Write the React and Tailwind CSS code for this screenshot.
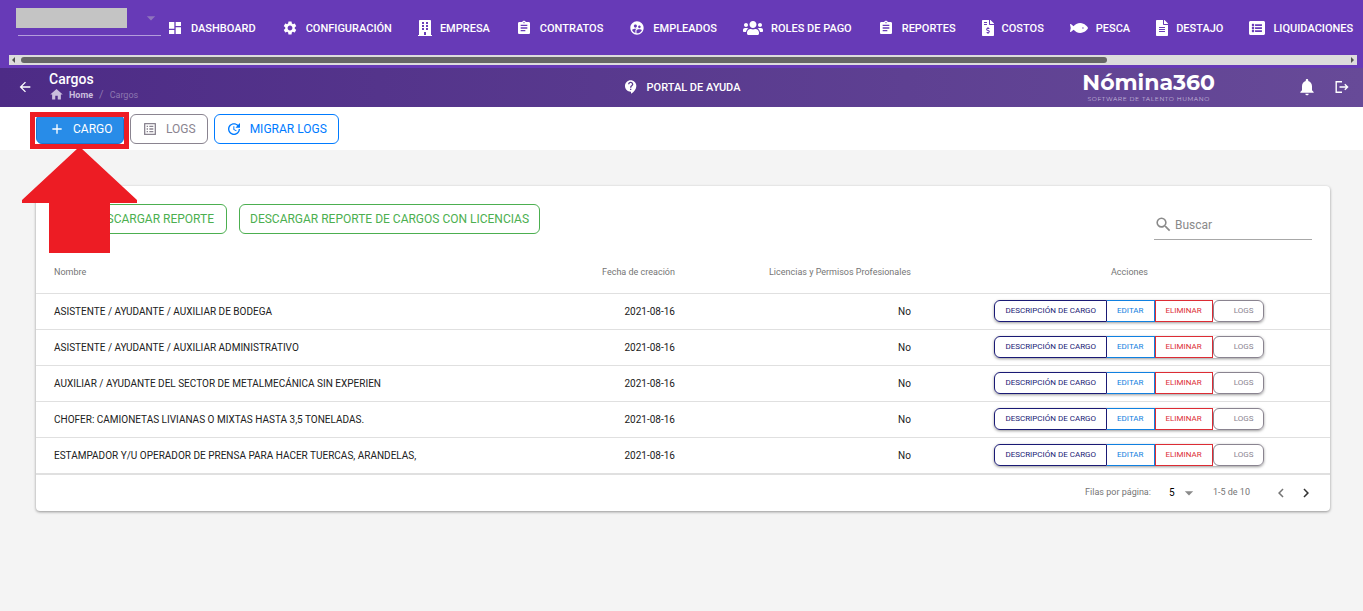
import { FaBuilding, FaFileAlt, FaFileInvoiceDollar, FaFish, FaListAlt, FaUsers } from 'react-icons/fa';
import {
  MdAdd,
  MdArrowBack,
  MdArrowDropDown,
  MdAssignment,
  MdChevronLeft,
  MdChevronRight,
  MdContactSupport,
  MdDashboard,
  MdHome,
  MdNotifications,
  MdOutlineListAlt,
  MdSearch,
  MdSettings,
  MdSupervisedUserCircle,
  MdUpdate,
} from 'react-icons/md';

const NAV_ITEMS = [
  { label: 'DASHBOARD', icon: MdDashboard, size: 'w-4' },
  { label: 'CONFIGURACIÓN', icon: MdSettings, size: 'w-4' },
  { label: 'EMPRESA', icon: FaBuilding, size: 'w-[14px]' },
  { label: 'CONTRATOS', icon: MdAssignment, size: 'w-4' },
  { label: 'EMPLEADOS', icon: MdSupervisedUserCircle, size: 'w-4' },
  { label: 'ROLES DE PAGO', icon: FaUsers, size: 'w-5' },
  { label: 'REPORTES', icon: MdAssignment, size: 'w-4' },
  { label: 'COSTOS', icon: FaFileInvoiceDollar, size: 'w-3' },
  { label: 'PESCA', icon: FaFish, size: 'w-[18px]' },
  { label: 'DESTAJO', icon: FaFileAlt, size: 'w-3' },
  { label: 'LIQUIDACIONES', icon: FaListAlt, size: 'w-4' },
];

const ROWS = [
  'ASISTENTE / AYUDANTE / AUXILIAR DE BODEGA',
  'ASISTENTE / AYUDANTE / AUXILIAR ADMINISTRATIVO',
  'AUXILIAR / AYUDANTE DEL SECTOR DE METALMECÁNICA SIN EXPERIEN',
  'CHOFER: CAMIONETAS LIVIANAS O MIXTAS HASTA 3,5 TONELADAS.',
  'ESTAMPADOR Y/U OPERADOR DE PRENSA PARA HACER TUERCAS, ARANDELAS,',
];

const NavBar = () => (
  <nav className="bg-[#673ab7] text-white pb-[3px]">
    <div className="flex h-[55px] overflow-hidden pl-4">
      <div className="w-[145px] shrink-0 pt-2">
        <div className="flex items-center justify-between">
          <div className="h-5 w-[111px] bg-[#c4c4c4]" />
          <MdArrowDropDown className="size-5 text-[#8f75bd]" />
        </div>
        <div className="mt-[7px] ml-0.5 h-px bg-[#b39ddb]" />
      </div>
      <ul className="flex items-center gap-[26px] pl-1.5">
        {NAV_ITEMS.map(({ label, icon: Icon, size }) => (
          <li key={label}>
            <a href="#" className="flex items-center gap-2 text-[11px] leading-4 font-medium whitespace-nowrap">
              <Icon className={`${size} h-4 shrink-0`} />
              <span className="pt-0.5">{label}</span>
            </a>
          </li>
        ))}
      </ul>
    </div>
    {/* Horizontal scroll track */}
    <div className="mr-1.5 ml-[9px] flex h-2.5 items-center justify-between bg-[#dcdcdc] px-[3px]">
      <svg className="h-1.5 w-[3px]" viewBox="0 0 3 6" fill="#505050"><path d="M3 0v6L0 3z" /></svg>
      <div className="mx-1.5 flex-1">
        <div className="h-1.5 w-[82%] rounded-full bg-[#666]" />
      </div>
      <svg className="h-1.5 w-[3px]" viewBox="0 0 3 6" fill="#505050"><path d="M0 0v6l3-3z" /></svg>
    </div>
  </nav>
);

const Header = () => (
  <header className="grid h-[39px] grid-cols-[1fr_auto_1fr] items-center bg-linear-to-r from-[#4d2b86] to-[#674a98] pb-0.5 text-white">
    <div className="flex items-center pl-[17px]">
      <button type="button" aria-label="Volver"><MdArrowBack className="size-4" /></button>
      <div className="ml-4">
        <h1 className="text-sm leading-4 font-medium">Cargos</h1>
        <div className="flex items-center text-[9px] leading-4">
          <MdHome className="size-[15px] text-[#cabedd]" />
          <a href="#" className="ml-[5px] font-bold text-[#cabedd]">Home</a>
          <span className="mx-1.5 text-[11px] text-[#8d77b0]">/</span>
          <span className="text-[#8d77b0]">Cargos</span>
        </div>
      </div>
    </div>
    <a href="#" className="flex items-center gap-2 text-[11px] leading-4 font-medium">
      <MdContactSupport className="size-4" />
      <span className="pt-0.5">PORTAL DE AYUDA</span>
    </a>
    <div className="flex items-center justify-end pr-[14px]">
      <div className="mr-[82px] text-center font-[Montserrat,Lato,sans-serif]">
        <div className="text-[22px] leading-6 font-bold">Nómina360</div>
        <div className="text-[6px] leading-2 tracking-widest text-[#cabedd]">SOFTWARE DE TALENTO HUMANO</div>
      </div>
      <button type="button" aria-label="Notificaciones"><MdNotifications className="size-5" /></button>
      <button type="button" aria-label="Salir" className="ml-[18px]">
        <svg className="size-[14px]" viewBox="0 0 14 14" fill="none" stroke="currentColor" strokeWidth="1.4">
          <path d="M7 1.8H1.2v10.4H7M4.5 7h8M9.8 4.2L12.6 7l-2.8 2.8" />
        </svg>
      </button>
    </div>
  </header>
);

const Toolbar = () => (
  <div className="flex h-[43px] items-start gap-1.5 bg-white pt-[7px] pl-9 text-xs">
    <button type="button" className="relative flex h-[30px] w-[88px] items-center rounded-md border border-[#1976d2] bg-[#288ce8] pl-3 text-white">
      <MdAdd className="mr-2 size-4" />
      CARGO
      {/* Highlight and pointer over the create button */}
      <svg className="absolute -top-[3px] -left-[15px] z-10 h-[142px] w-[118px]" viewBox="0 0 118 142">
        <path d="M10.5 2.5h94v32h-94z" fill="none" stroke="#ed1c24" strokeWidth="5" />
        <path d="M56 36h3l56 52v3H88v50H27V91H0v-3z" fill="#ed1c24" />
      </svg>
    </button>
    <button type="button" className="flex h-[30px] items-center gap-2 rounded-md border border-[#8a8490] px-[11px] text-[#8a8490]">
      <MdOutlineListAlt className="size-4" />
      LOGS
    </button>
    <button type="button" className="flex h-[30px] items-center gap-2 rounded-md border border-[#007bff] px-[11px] text-[#007bff]">
      <MdUpdate className="size-4" />
      MIGRAR LOGS
    </button>
  </div>
);

const RowActions = () => (
  <div className="inline-flex h-[22px] rounded-md align-middle text-[8px] shadow-[0_1px_3px_rgba(0,0,0,0.4)]">
    <button type="button" className="rounded-l-md border border-[#1a1a75] px-2.5 text-[#1a1a75]">DESCRIPCIÓN DE CARGO</button>
    <button type="button" className="border border-l-0 border-[#1080e0] px-2.5 text-[#1080e0]">EDITAR</button>
    <button type="button" className="border border-[#dc2c34] px-2.5 text-[#dc2c34]">ELIMINAR</button>
    <button type="button" className="rounded-md border border-[#8a8490] pr-2.5 pl-5 text-[#8a8490]">LOGS</button>
  </div>
);

const CargosTable = () => (
  <table className="w-full table-fixed border-collapse text-[10px]">
    <colgroup>
      <col className="w-[32%]" />
      <col className="w-[19%]" />
      <col className="w-[18%]" />
      <col className="w-[31%]" />
    </colgroup>
    <thead className="text-[9px] text-[#757575]">
      <tr className="h-[42px] border-b border-[#e0e0e0]">
        <th className="pt-0.5 pl-[18px] text-left font-normal">Nombre</th>
        <th className="pt-0.5 pr-[21px] text-right font-normal">Fecha de creación</th>
        <th className="pt-0.5 pr-[18px] text-right font-normal">Licencias y Permisos Profesionales</th>
        <th className="pt-0.5 text-center font-normal">Acciones</th>
      </tr>
    </thead>
    <tbody className="text-[#212121]">
      {ROWS.map((name) => (
        <tr key={name} className="h-9 border-b border-[#e0e0e0]">
          <td className="pl-[18px] whitespace-nowrap">{name}</td>
          <td className="pr-[21px] text-right">2021-08-16</td>
          <td className="pr-[18px] text-right">No</td>
          <td className="text-center"><RowActions /></td>
        </tr>
      ))}
    </tbody>
  </table>
);

const Pagination = () => (
  <div className="flex h-[37px] items-center justify-end border-t border-[#e0e0e0] pr-[15px] text-[9px] text-[#757575]">
    <label htmlFor="page-size">Filas por página:</label>
    <div className="relative ml-4 flex items-center">
      <select id="page-size" defaultValue="5" className="w-7 appearance-none bg-transparent pl-0.5 text-[10px] text-black">
        <option>5</option>
        <option>10</option>
      </select>
      <MdArrowDropDown className="pointer-events-none absolute -right-1 size-5 text-[#8a8a8a]" />
    </div>
    <span className="ml-[18px]">1-5 de 10</span>
    <button type="button" aria-label="Anterior" className="ml-[22px]"><MdChevronLeft className="size-[18px]" /></button>
    <button type="button" aria-label="Siguiente" className="ml-[7px] text-[#333]"><MdChevronRight className="size-[18px]" /></button>
  </div>
);

export default function App() {
  return (
    <div className="min-h-screen bg-[#f4f4f4] font-[Roboto,sans-serif]">
      <NavBar />
      <Header />
      <Toolbar />
      <main className="mt-9 mr-[33px] ml-9 rounded-sm bg-white shadow-[0_1px_3px_rgba(0,0,0,0.4)]">
        <div className="flex items-start justify-between px-[18px] pt-[18px] pb-[11px]">
          <div className="flex gap-3 text-xs text-[#4caf50]">
            <button type="button" className="h-[30px] w-[173px] rounded-md border border-[#4caf50] pr-3 text-right">DESCARGAR REPORTE</button>
            <button type="button" className="h-[30px] rounded-md border border-[#4caf50] px-2.5">DESCARGAR REPORTE DE CARGOS CON LICENCIAS</button>
          </div>
          <label className="mt-1.5 flex h-[30px] w-[158px] items-center border-b border-[#a8a8a8] text-[#8a8a8a]">
            <MdSearch className="size-[19px] shrink-0" />
            <input type="text" placeholder="Buscar" aria-label="Buscar" className="ml-0.5 w-full text-xs outline-none placeholder:text-[#8a8a8a]" />
          </label>
        </div>
        <CargosTable />
        <Pagination />
      </main>
    </div>
  );
}
